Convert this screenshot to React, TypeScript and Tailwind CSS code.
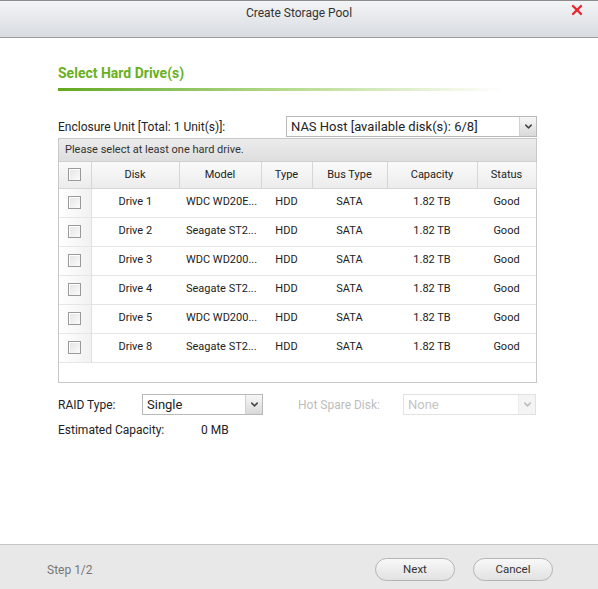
import { ChevronDown, X } from "lucide-react";

const drives = [
  { disk: "Drive 1", model: "WDC WD20E..." },
  { disk: "Drive 2", model: "Seagate ST2..." },
  { disk: "Drive 3", model: "WDC WD200..." },
  { disk: "Drive 4", model: "Seagate ST2..." },
  { disk: "Drive 5", model: "WDC WD200..." },
  { disk: "Drive 8", model: "Seagate ST2..." },
];

const columns = [
  { label: "Disk", w: "w-[88px]" },
  { label: "Model", w: "w-[82px]" },
  { label: "Type", w: "w-[51px]" },
  { label: "Bus Type", w: "w-[75px]" },
  { label: "Capacity", w: "w-[90px]" },
  { label: "Status", w: "w-[59px]" },
];

function Checkbox() {
  return (
    <span className="inline-block h-[13px] w-[13px] border border-[#9a9a9a] bg-gradient-to-br from-[#e4e4e4] to-[#fbfbfb] shadow-[inset_1px_1px_0_#fff]" />
  );
}

function Select({ value, className, disabled }: { value: string; className: string; disabled?: boolean }) {
  return (
    <div
      className={`flex h-[21px] items-center border ${disabled ? "border-[#e2e2e2] text-[#c4c4c4]" : "border-[#b9b9b9] text-[#222]"} bg-white ${className}`}
    >
      <span className="flex-1 truncate pl-[4px] text-[13px]">{value}</span>
      <span
        className={`flex h-full w-[17px] items-center justify-center border-l ${disabled ? "border-[#ececec] bg-[#f4f4f4] text-[#bbb]" : "border-[#d0d0d0] bg-gradient-to-b from-[#f7f7f7] to-[#d9d9d9] text-[#444]"}`}
      >
        <ChevronDown size={11} strokeWidth={3.2} />
      </span>
    </div>
  );
}

export default function App() {
  return (
    <div className="flex h-[589px] w-[598px] flex-col bg-white font-['Roboto','Liberation_Sans',sans-serif] text-[12px] text-[#333]">
      {/* title bar */}
      <div className="relative flex h-[38px] justify-center border-t border-b border-t-[#8c8c8c] border-b-[#9a9a9a] bg-gradient-to-b from-[#f3f4f6] to-[#d8dce1] pt-[3px]">
        <span className="text-[12px] text-[#333]">Create Storage Pool</span>
        <X className="absolute right-[13px] top-[1px] text-[#e8242a]" size={16} strokeWidth={3.4} />
      </div>

      <div className="flex-1 pl-[58px] pr-[61px] pt-[25px]">
        <div className="text-[14px] font-bold text-[#68b01e]">Select Hard Drive(s)</div>
        <div className="mt-[4px] h-[3px] w-[445px] bg-gradient-to-r from-[#63a81a] via-[#b4d98a] to-transparent" />

        <div className="mt-[25px] flex items-center justify-between">
          <span className="text-[12px] text-[#222]">Enclosure Unit [Total: 1 Unit(s)]:</span>
          <Select value="NAS Host [available disk(s): 6/8]" className="w-[251px]" />
        </div>

        {/* drive list */}
        <div className="mt-[1px] h-[245px] border border-[#c8c8c8] bg-white">
          <div className="flex h-[23px] items-center border-b border-[#cfcfcf] bg-gradient-to-b from-[#ececec] to-[#dedede] pl-[6px] text-[11px] text-[#333]">
            Please select at least one hard drive.
          </div>
          <table className="w-[477px] table-fixed border-collapse text-[11px] text-[#222]">
            <thead>
              <tr className="h-[26px] bg-gradient-to-b from-[#fafafa] to-[#ececec]">
                <th className="w-[32px] border-r border-b border-[#d6d6d6] font-normal">
                  <div className="flex justify-center">
                    <Checkbox />
                  </div>
                </th>
                {columns.map((c) => (
                  <th key={c.label} className={`${c.w} border-r border-b border-[#d6d6d6] text-center font-normal`}>
                    {c.label}
                  </th>
                ))}
              </tr>
            </thead>
            <tbody>
              {drives.map((d) => (
                <tr key={d.disk} className="h-[29px] border-b border-[#e6e6e6]">
                  <td className="border-r border-[#e0e0e0] bg-gradient-to-r from-white to-[#f1f1f1]">
                    <div className="flex justify-center">
                      <Checkbox />
                    </div>
                  </td>
                  <td className="text-center">{d.disk}</td>
                  <td className="truncate pl-[7px]">{d.model}</td>
                  <td className="text-center">HDD</td>
                  <td className="text-center">SATA</td>
                  <td className="text-center">1.82 TB</td>
                  <td className="text-center">Good</td>
                </tr>
              ))}
            </tbody>
          </table>
        </div>

        <div className="mt-[11px] flex items-center">
          <span className="w-[84px] text-[12px] text-[#222]">RAID Type:</span>
          <Select value="Single" className="w-[121px]" />
          <span className="ml-[35px] w-[105px] text-[12px] text-[#bdbdbd]">Hot Spare Disk:</span>
          <Select value="None" className="w-[133px]" disabled />
        </div>
        <div className="mt-[6px] flex items-center text-[12px] text-[#222]">
          <span className="w-[143px]">Estimated Capacity:</span>
          <span>0 MB</span>
        </div>
      </div>

      {/* footer */}
      <div className="flex h-[45px] items-center border-t border-[#c4c4c4] bg-[#e8e8e8] pl-[47px] pr-[45px] pt-[5px]">
        <span className="flex-1 text-[12px] text-[#777]">Step 1/2</span>
        <button className="h-[23px] w-[80px] rounded-full border border-[#b4b4b4] bg-gradient-to-b from-[#f8f8f8] to-[#e2e2e2] text-[11.5px] text-[#333]">
          Next
        </button>
        <button className="ml-[18px] h-[23px] w-[80px] rounded-full border border-[#b4b4b4] bg-gradient-to-b from-[#f8f8f8] to-[#e2e2e2] text-[11.5px] text-[#333]">
          Cancel
        </button>
      </div>
    </div>
  );
}
